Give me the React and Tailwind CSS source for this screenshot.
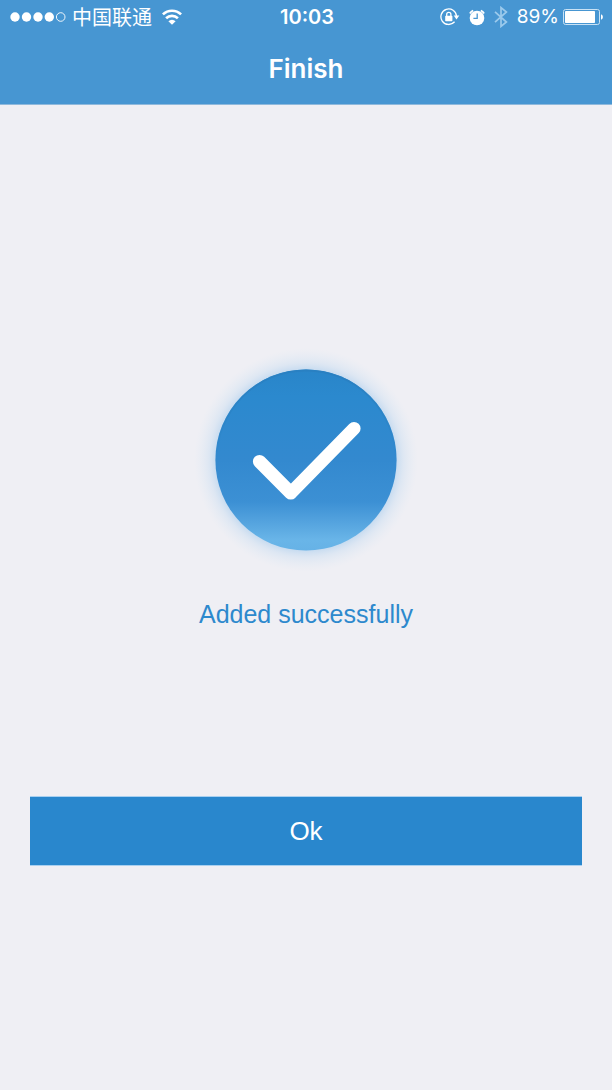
const SignalDots = () => (
    <svg width="56" height="12" viewBox="0 0 56 12" fill="white" aria-hidden="true">
        <circle cx="5" cy="6" r="4.7" />
        <circle cx="16.5" cy="6" r="4.7" />
        <circle cx="28" cy="6" r="4.7" />
        <circle cx="39.3" cy="6" r="4.7" />
        <circle cx="50.7" cy="6" r="4.3" fill="none" stroke="white" strokeWidth="0.9" />
    </svg>
);

const WifiIcon = () => (
    <svg width="20" height="16" viewBox="0 0 20 16" fill="none" stroke="white" strokeWidth="2.6" aria-hidden="true">
        <path d="M0.9 5.4 A13 13 0 0 1 19.1 5.4" />
        <path d="M4.1 9.3 A8.4 8.4 0 0 1 15.9 9.3" />
        <path d="M10 15.8 L6.4 12.2 A5 5 0 0 1 13.6 12.2 Z" fill="white" stroke="none" />
    </svg>
);

const RotationLockIcon = () => (
    <svg width="20" height="18" viewBox="0 0 20 18" fill="none" stroke="white" strokeWidth="1.3" aria-hidden="true">
        <path d="M14.6 13.8 A7.8 7.8 0 1 1 16.5 8.2" />
        <path d="M13.7 7.6 H19.3 L16.5 11.4 Z" fill="white" stroke="none" />
        <rect x="5.2" y="7.8" width="7.2" height="5.4" rx="0.6" fill="white" stroke="none" />
        <path d="M6.7 8.4 V6.5 A2.1 2.1 0 0 1 10.9 6.5 V8.4" />
    </svg>
);

const AlarmIcon = () => (
    <svg width="16" height="17" viewBox="0 0 16 17" fill="none" aria-hidden="true">
        <circle cx="8" cy="9" r="7.3" fill="white" />
        <path d="M0.9 4.4 A8.6 8.6 0 0 1 4.2 1.5" stroke="white" strokeWidth="1.8" />
        <path d="M11.8 1.5 A8.6 8.6 0 0 1 15.1 4.4" stroke="white" strokeWidth="1.8" />
        <path d="M8.2 4.4 V9.4 H4.4" stroke="#4796d2" strokeWidth="1.3" />
    </svg>
);

const BluetoothIcon = () => (
    <svg width="14" height="22" viewBox="0 0 14 22" fill="none" stroke="#9ccaec" strokeWidth="1.7" aria-hidden="true">
        <path d="M1 5.8 L12.4 16 L7 20.4 V1.6 L12.4 6 L1 16.2" />
    </svg>
);

const BatteryIcon = () => (
    <svg width="41" height="16" viewBox="0 0 41 16" fill="none" aria-hidden="true">
        <rect x="0.5" y="0.5" width="36" height="15" rx="2" stroke="#c9e2f5" />
        <rect x="2" y="2" width="30" height="12" rx="0.8" fill="white" />
        <path d="M38 5.2 A3 3 0 0 1 38 10.8 Z" fill="white" />
    </svg>
);

const SuccessIcon = () => (
    <svg width="232" height="232" viewBox="0 0 232 232" fill="none" role="img" aria-label="Success">
        <defs>
            <linearGradient id="disc" x1="0" y1="29" x2="0" y2="211" gradientUnits="userSpaceOnUse">
                <stop offset="0" stopColor="#2985c9" />
                <stop offset="0.15" stopColor="#2b89ce" />
                <stop offset="0.5" stopColor="#3389cf" />
                <stop offset="0.73" stopColor="#3c90d4" />
                <stop offset="0.84" stopColor="#54a3de" />
                <stop offset="0.94" stopColor="#69b5e8" />
                <stop offset="1" stopColor="#66b2e6" />
            </linearGradient>
            <radialGradient id="glow" cx="116" cy="120" r="112" gradientUnits="userSpaceOnUse">
                <stop offset="0.8" stopColor="#b2d1ee" stopOpacity="0.7" />
                <stop offset="0.87" stopColor="#c4dbf1" stopOpacity="0.4" />
                <stop offset="0.94" stopColor="#d2e3f3" stopOpacity="0.2" />
                <stop offset="1" stopColor="#dce8f4" stopOpacity="0" />
            </radialGradient>
            <linearGradient id="rim" x1="0" y1="29" x2="0" y2="120" gradientUnits="userSpaceOnUse">
                <stop offset="0" stopColor="#2980c2" />
                <stop offset="1" stopColor="#2980c2" stopOpacity="0" />
            </linearGradient>
        </defs>
        <circle cx="116" cy="120" r="112" fill="url(#glow)" />
        <circle cx="116" cy="120" r="90.6" fill="url(#disc)" />
        <circle cx="116" cy="120" r="89.6" stroke="url(#rim)" strokeWidth="2" />
        <path d="M69.5 121.5 L100.8 153 L164 88.5" stroke="white" strokeWidth="13.2" strokeLinecap="round" strokeLinejoin="round" />
    </svg>
);

const StatusBar = () => (
    <div className="grid grid-cols-[1fr_auto_1fr] items-center h-[34px] pl-2.5 pr-2 text-xl">
        <div className="flex items-center">
            <SignalDots />
            <span className="ml-1.5 mr-2.5 font-['Noto_Sans_CJK_SC',sans-serif] leading-8">中国联通</span>
            <WifiIcon />
        </div>
        <span className="font-semibold">10:03</span>
        <div className="flex items-center justify-end gap-1">
            <div className="flex items-center gap-[9px]">
                <RotationLockIcon />
                <AlarmIcon />
                <BluetoothIcon />
                <span className="text-[19px]">89%</span>
            </div>
            <BatteryIcon />
        </div>
    </div>
);

const App = () => {
    return (
        <div className="min-h-screen bg-[#efeff4] font-['Inter',sans-serif]">
            <header className="bg-[#4796d2] text-white border-b border-[#8fb9dc]">
                <StatusBar />
                <h1 className="h-[70px] pt-[15px] text-center text-[26px] leading-10 font-semibold">Finish</h1>
            </header>
            <main className="flex flex-col items-center px-[30px] pt-[235px] font-['Liberation_Sans',sans-serif]">
                <SuccessIcon />
                <p className="mt-6 text-[25px] leading-9 text-[#2d89cd]">Added successfully</p>
                <button
                    type="button"
                    className="mt-[164px] h-[70px] w-full bg-[#2987cd] border-y border-[#a9d0f0] text-[26px] text-white"
                >
                    Ok
                </button>
            </main>
        </div>
    );
};

export default App;
